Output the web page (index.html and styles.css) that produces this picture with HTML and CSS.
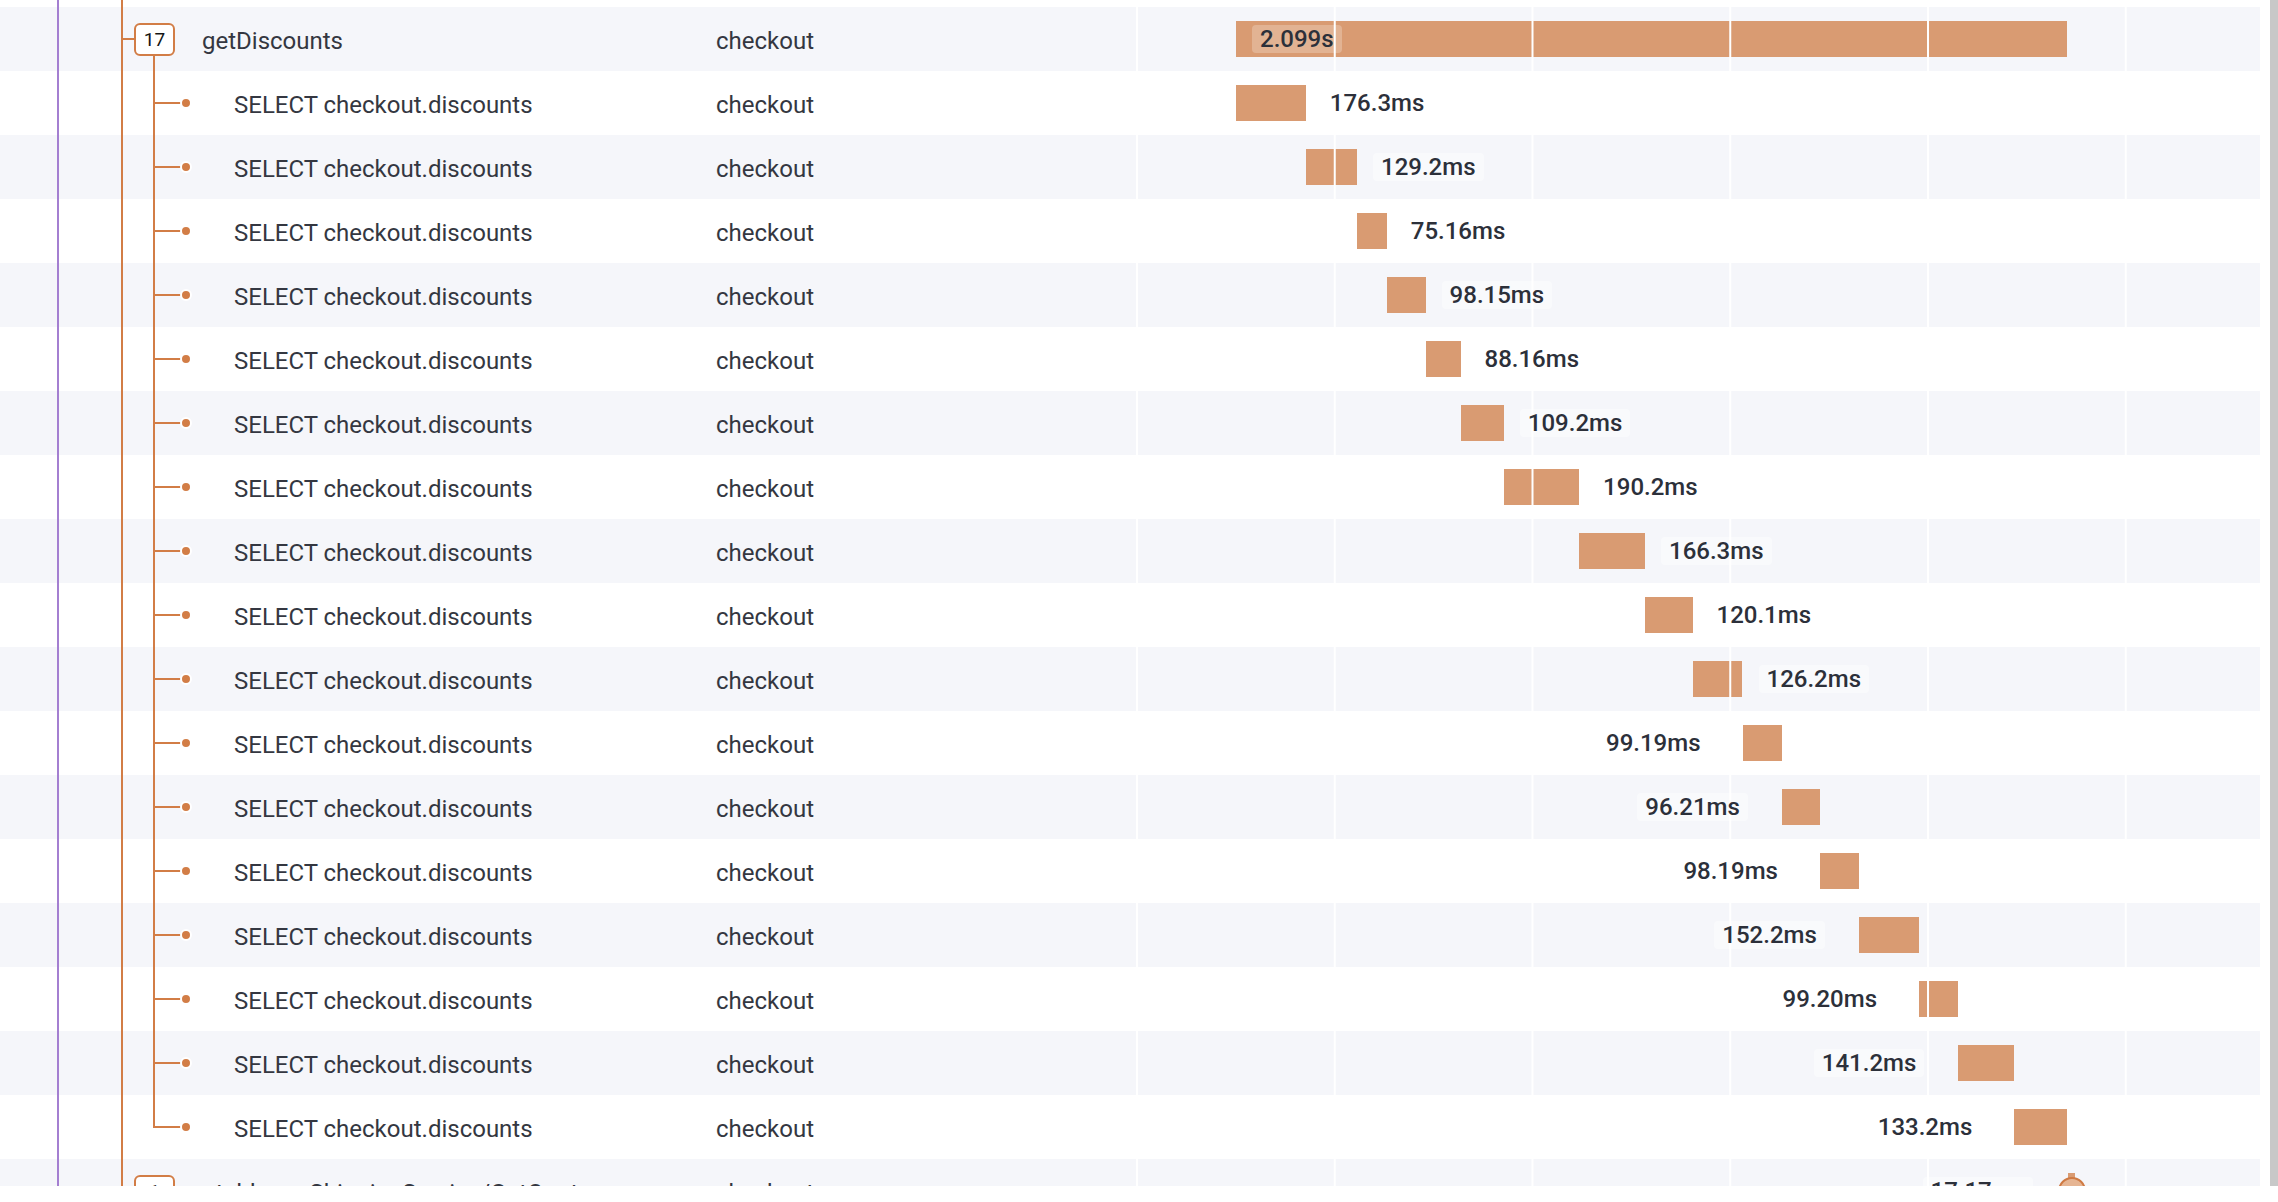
FILE: index.html
```html
<!DOCTYPE html>
<html>
<head>
<meta charset="utf-8">
<title>Trace</title>
<link rel="stylesheet" href="styles.css">
</head>
<body>
<div class="page">
  <div class="list">
    <div class="row parent alt">
      <div class="name"><i class="hl"></i><span class="badge">17</span><span class="txt">getDiscounts</span></div>
      <div class="svc"><span>checkout</span></div>
      <div class="tl"><div class="bar" style="left:100px;width:831px"></div><span class="dur on-bar" style="left:116px">2.099s</span></div>
    </div>
    <div class="row child">
      <div class="name"><i class="hl"></i><i class="dot"></i><span class="txt">SELECT checkout.discounts</span></div>
      <div class="svc"><span>checkout</span></div>
      <div class="tl"><div class="bar" style="left:100px;width:69.82px"></div><span class="dur" style="left:185.8px">176.3ms</span></div>
    </div>
    <div class="row child alt">
      <div class="name"><i class="hl"></i><i class="dot"></i><span class="txt">SELECT checkout.discounts</span></div>
      <div class="svc"><span>checkout</span></div>
      <div class="tl"><div class="bar" style="left:169.82px;width:51.17px"></div><span class="dur" style="left:237px">129.2ms</span></div>
    </div>
    <div class="row child">
      <div class="name"><i class="hl"></i><i class="dot"></i><span class="txt">SELECT checkout.discounts</span></div>
      <div class="svc"><span>checkout</span></div>
      <div class="tl"><div class="bar" style="left:220.98px;width:29.77px"></div><span class="dur" style="left:266.75px">75.16ms</span></div>
    </div>
    <div class="row child alt">
      <div class="name"><i class="hl"></i><i class="dot"></i><span class="txt">SELECT checkout.discounts</span></div>
      <div class="svc"><span>checkout</span></div>
      <div class="tl"><div class="bar" style="left:250.75px;width:38.87px"></div><span class="dur" style="left:305.6px">98.15ms</span></div>
    </div>
    <div class="row child">
      <div class="name"><i class="hl"></i><i class="dot"></i><span class="txt">SELECT checkout.discounts</span></div>
      <div class="svc"><span>checkout</span></div>
      <div class="tl"><div class="bar" style="left:289.62px;width:34.91px"></div><span class="dur" style="left:340.5px">88.16ms</span></div>
    </div>
    <div class="row child alt">
      <div class="name"><i class="hl"></i><i class="dot"></i><span class="txt">SELECT checkout.discounts</span></div>
      <div class="svc"><span>checkout</span></div>
      <div class="tl"><div class="bar" style="left:324.53px;width:43.25px"></div><span class="dur" style="left:383.8px">109.2ms</span></div>
    </div>
    <div class="row child">
      <div class="name"><i class="hl"></i><i class="dot"></i><span class="txt">SELECT checkout.discounts</span></div>
      <div class="svc"><span>checkout</span></div>
      <div class="tl"><div class="bar" style="left:367.78px;width:75.32px"></div><span class="dur" style="left:459.1px">190.2ms</span></div>
    </div>
    <div class="row child alt">
      <div class="name"><i class="hl"></i><i class="dot"></i><span class="txt">SELECT checkout.discounts</span></div>
      <div class="svc"><span>checkout</span></div>
      <div class="tl"><div class="bar" style="left:443.1px;width:65.86px"></div><span class="dur" style="left:525px">166.3ms</span></div>
    </div>
    <div class="row child">
      <div class="name"><i class="hl"></i><i class="dot"></i><span class="txt">SELECT checkout.discounts</span></div>
      <div class="svc"><span>checkout</span></div>
      <div class="tl"><div class="bar" style="left:508.96px;width:47.56px"></div><span class="dur" style="left:572.5px">120.1ms</span></div>
    </div>
    <div class="row child alt">
      <div class="name"><i class="hl"></i><i class="dot"></i><span class="txt">SELECT checkout.discounts</span></div>
      <div class="svc"><span>checkout</span></div>
      <div class="tl"><div class="bar" style="left:556.52px;width:49.98px"></div><span class="dur" style="left:622.5px">126.2ms</span></div>
    </div>
    <div class="row child">
      <div class="name"><i class="hl"></i><i class="dot"></i><span class="txt">SELECT checkout.discounts</span></div>
      <div class="svc"><span>checkout</span></div>
      <div class="tl"><div class="bar" style="left:606.5px;width:39.28px"></div><span class="dur" style="right:551.5px">99.19ms</span></div>
    </div>
    <div class="row child alt">
      <div class="name"><i class="hl"></i><i class="dot"></i><span class="txt">SELECT checkout.discounts</span></div>
      <div class="svc"><span>checkout</span></div>
      <div class="tl"><div class="bar" style="left:645.78px;width:38.1px"></div><span class="dur" style="right:512.2px">96.21ms</span></div>
    </div>
    <div class="row child">
      <div class="name"><i class="hl"></i><i class="dot"></i><span class="txt">SELECT checkout.discounts</span></div>
      <div class="svc"><span>checkout</span></div>
      <div class="tl"><div class="bar" style="left:683.88px;width:38.89px"></div><span class="dur" style="right:474.1px">98.19ms</span></div>
    </div>
    <div class="row child alt">
      <div class="name"><i class="hl"></i><i class="dot"></i><span class="txt">SELECT checkout.discounts</span></div>
      <div class="svc"><span>checkout</span></div>
      <div class="tl"><div class="bar" style="left:722.77px;width:60.27px"></div><span class="dur" style="right:435.2px">152.2ms</span></div>
    </div>
    <div class="row child">
      <div class="name"><i class="hl"></i><i class="dot"></i><span class="txt">SELECT checkout.discounts</span></div>
      <div class="svc"><span>checkout</span></div>
      <div class="tl"><div class="bar" style="left:783.04px;width:39.29px"></div><span class="dur" style="right:375px">99.20ms</span></div>
    </div>
    <div class="row child alt">
      <div class="name"><i class="hl"></i><i class="dot"></i><span class="txt">SELECT checkout.discounts</span></div>
      <div class="svc"><span>checkout</span></div>
      <div class="tl"><div class="bar" style="left:822.33px;width:55.92px"></div><span class="dur" style="right:335.7px">141.2ms</span></div>
    </div>
    <div class="row child last">
      <div class="name"><i class="hl"></i><i class="dot"></i><span class="txt">SELECT checkout.discounts</span></div>
      <div class="svc"><span>checkout</span></div>
      <div class="tl"><div class="bar" style="left:878.25px;width:52.75px"></div><span class="dur" style="right:279.75px">133.2ms</span></div>
    </div>
    <div class="row parent collapsed alt">
      <div class="name"><i class="hl"></i><span class="badge">1</span><span class="txt">oteldemo.ShippingService/GetQuote</span></div>
      <div class="svc"><span>checkout</span></div>
      <div class="tl"><div class="bar" style="left:932px;width:7px"></div><span class="marker" style="left:921.5px"></span><span class="dur" style="right:227px">17.17ms</span></div>
    </div>
    <div class="ticks"></div>
  </div>
  <div class="scrollbar"><div class="thumb"></div></div>
</div>
</body>
</html>
```

FILE: styles.css
```css
* { box-sizing: border-box; }
html, body { margin: 0; padding: 0; background: #fff; }
body {
  width: 2278px;
  height: 1202px;
  overflow: hidden;
  font-family: Roboto, "Liberation Sans", sans-serif;
  color: #343741;
}
.page {
  display: flex;
  gap: 10px;
  height: 1186px;
  overflow: hidden;
}
.list {
  position: relative;
  width: 2260px;
  padding-top: 7px;
}
.list::before,
.list::after {
  content: "";
  position: absolute;
  top: 0;
  bottom: 0;
  width: 2px;
}
.list::before { left: 57px; background: #a47fd1; }
.list::after { left: 121px; background: #d27d46; }

.row {
  display: grid;
  grid-template-columns: 716px 420px 1124px;
  height: 64px;
  background: #fff;
}
.row.alt { background: #f5f6fa; }

.name {
  position: relative;
  display: flex;
  align-items: center;
  font-size: 24px;
  white-space: nowrap;
}
.txt,
.svc span { padding-top: 3px; }
.svc {
  display: flex;
  align-items: center;
  font-size: 24px;
}
.hl {
  display: block;
  height: 2px;
  background: #d27d46;
}
.parent .name { padding-left: 123px; }
.parent .hl { width: 11px; }
.badge {
  width: 41px;
  height: 33px;
  border: 2px solid #d27d46;
  border-radius: 6px;
  background: #fff;
  display: flex;
  align-items: center;
  justify-content: center;
  font-size: 19px;
  color: #151515;
}
.parent .txt { margin-left: 27px; }
.parent .name::after {
  content: "";
  position: absolute;
  left: 153px;
  top: 48px;
  bottom: 0;
  width: 2px;
  background: #d27d46;
}
.parent.collapsed .name::after { display: none; }

.child .name { padding-left: 153px; }
.child .name::before {
  content: "";
  position: absolute;
  left: 153px;
  top: 0;
  bottom: 0;
  width: 2px;
  background: #d27d46;
}
.child.last .name::before { bottom: 31px; }
.child .hl { width: 28px; }
.dot {
  display: block;
  width: 12px;
  height: 12px;
  margin-left: -1px;
  border-radius: 50%;
  background: #d27d46;
  border: 2px solid #fff;
}
.child .txt { margin-left: 42px; }

.tl { position: relative; }
.bar {
  position: absolute;
  top: 14px;
  height: 36px;
  background: #d99b72;
}
.dur {
  position: absolute;
  z-index: 2;
  top: 18px;
  height: 28px;
  line-height: 28px;
  padding: 0 8px;
  border-radius: 4px;
  background: rgba(255, 255, 255, 0.45);
  font-size: 24px;
  font-weight: 500;
  color: #2c303a;
  white-space: nowrap;
}
.dur.on-bar { background: rgba(255, 255, 255, 0.24); }
.marker {
  position: absolute;
  top: 18px;
  width: 28px;
  height: 28px;
  border-radius: 50%;
  border: 2px solid #cf7a43;
  background: #e6b593;
}

.ticks {
  position: absolute;
  z-index: 1;
  top: 0;
  bottom: 0;
  left: 1135.5px;
  width: 1124.5px;
  background: linear-gradient(to right, #fff 2px, transparent 2px) 0 0 / 197.75px 100% repeat-x;
  pointer-events: none;
}

.scrollbar {
  width: 8px;
  height: 1186px;
}
.thumb {
  height: 1186px;
  background: #c8c8c8;
}
```
